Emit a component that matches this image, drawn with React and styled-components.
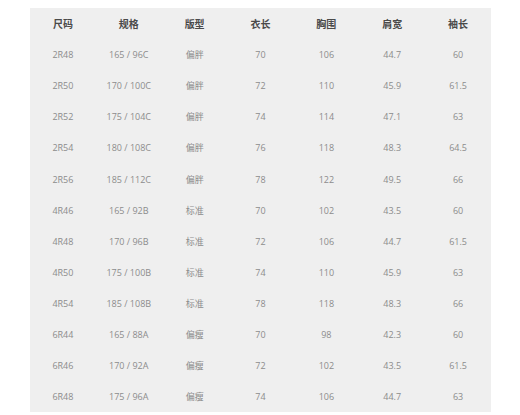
import React from "react";
import styled, { createGlobalStyle } from "styled-components";

const columns = ["尺码", "规格", "版型", "衣长", "胸围", "肩宽", "袖长"];

const rows = [
  ["2R48", "165 / 96C", "偏胖", "70", "106", "44.7", "60"],
  ["2R50", "170 / 100C", "偏胖", "72", "110", "45.9", "61.5"],
  ["2R52", "175 / 104C", "偏胖", "74", "114", "47.1", "63"],
  ["2R54", "180 / 108C", "偏胖", "76", "118", "48.3", "64.5"],
  ["2R56", "185 / 112C", "偏胖", "78", "122", "49.5", "66"],
  ["4R46", "165 / 92B", "标准", "70", "102", "43.5", "60"],
  ["4R48", "170 / 96B", "标准", "72", "106", "44.7", "61.5"],
  ["4R50", "175 / 100B", "标准", "74", "110", "45.9", "63"],
  ["4R54", "185 / 108B", "标准", "78", "118", "48.3", "66"],
  ["6R44", "165 / 88A", "偏瘦", "70", "98", "42.3", "60"],
  ["6R46", "170 / 92A", "偏瘦", "72", "102", "43.5", "61.5"],
  ["6R48", "175 / 96A", "偏瘦", "74", "106", "44.7", "63"],
];

const GlobalStyle = createGlobalStyle`
  html, body {
    margin: 0;
    padding: 0;
    background: #ffffff;
  }
  body {
    font-family: "Open Sans", "Noto Sans CJK SC", sans-serif;
  }
`;

const Page = styled.div`
  width: 520px;
  height: 415px;
  overflow: hidden;
  padding: 8px 0 0 30px;
  box-sizing: border-box;
`;

const SizeTable = styled.div`
  width: 461px;
  background: #efefef;
  display: grid;
  grid-template-columns: repeat(7, 1fr);
  grid-auto-rows: 31.1px;
`;

const Cell = styled.div`
  display: flex;
  align-items: center;
  justify-content: center;
  white-space: nowrap;
  font-size: ${(p) => (p.$head ? "10px" : "9px")};
  font-weight: ${(p) => (p.$head ? 700 : 400)};
  color: ${(p) => (p.$head ? "#4a4a4a" : "#8c8c8c")};
`;

export default function App() {
  return (
    <Page>
      <GlobalStyle />
      <SizeTable>
        {columns.map((c) => (
          <Cell key={c} $head>
            {c}
          </Cell>
        ))}
        {rows.map((r) =>
          r.map((v, i) => <Cell key={r[0] + i}>{v}</Cell>)
        )}
      </SizeTable>
    </Page>
  );
}
